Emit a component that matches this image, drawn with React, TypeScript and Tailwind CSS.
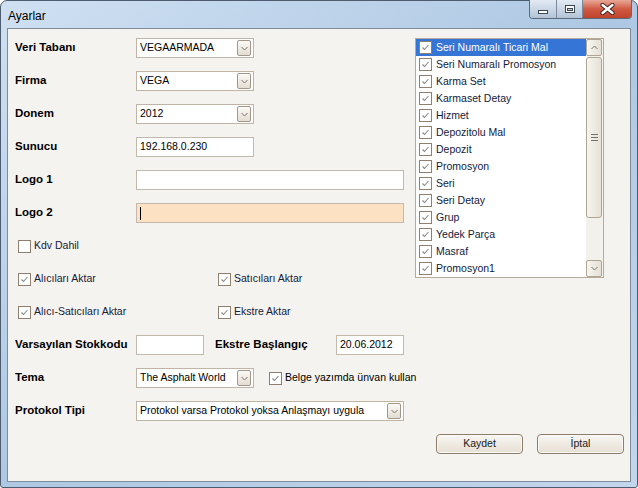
import React from "react";

const items = [
  "Seri Numaralı Ticari Mal",
  "Seri Numaralı Promosyon",
  "Karma Set",
  "Karmaset Detay",
  "Hizmet",
  "Depozitolu Mal",
  "Depozit",
  "Promosyon",
  "Seri",
  "Seri Detay",
  "Grup",
  "Yedek Parça",
  "Masraf",
  "Promosyon1",
];

// Small tick used by every checkbox
const Tick = () => (
  <svg width="9" height="9" viewBox="0 0 9 9">
    <polyline points="1.5,4.5 3.5,6.5 7.5,2" fill="none" stroke="#8a8a8a" strokeWidth="1.1" />
  </svg>
);

const CheckBox: React.FC<{ checked?: boolean }> = ({ checked }) => (
  <div className="w-[13px] h-[13px] shrink-0 border border-[#8e7f70] bg-gradient-to-br from-[#e9e7e3] to-white flex items-center justify-center">
    <div className="w-[11px] h-[11px] bg-white flex items-center justify-center">{checked && <Tick />}</div>
  </div>
);

const Chevron: React.FC<{ up?: boolean }> = ({ up }) => (
  <svg width="7" height="5" viewBox="0 0 7 5">
    <polyline
      points={up ? "0.5,4 3.5,1 6.5,4" : "0.5,1 3.5,4 6.5,1"}
      fill="none"
      stroke="#7a7468"
      strokeWidth="1"
    />
  </svg>
);

const DropButton = () => (
  <div className="w-[14px] h-[16px] mr-[2px] shrink-0 rounded-[2px] border border-[#a3978a] bg-gradient-to-b from-[#fbfaf7] to-[#e3ddd2] flex items-center justify-center">
    <Chevron />
  </div>
);

const ComboBox: React.FC<{ value: string; width: string }> = ({ value, width }) => (
  <div className={`${width} h-[20px] border border-[#bfb4a6] bg-white flex items-center`}>
    <span className="flex-1 pl-[3px] text-black truncate">{value}</span>
    <DropButton />
  </div>
);

const TextBox: React.FC<{ value?: string; width: string; bg?: string; caret?: boolean }> = ({
  value,
  width,
  bg = "bg-white",
  caret,
}) => (
  <div className={`${width} h-[20px] border border-[#c2b8ab] ${bg} flex items-center pl-[3px] text-black`}>
    {caret && <div className="w-px h-[13px] bg-black" />}
    {value}
  </div>
);

const Label: React.FC<{ text: string; width?: string }> = ({ text, width = "w-[121px]" }) => (
  <div className={`${width} shrink-0 font-bold text-[11.5px] text-black`}>{text}</div>
);

const CheckLabel: React.FC<{ text: string }> = ({ text }) => (
  <div className="flex items-center gap-[3px]">
    <CheckBox checked={text !== "Kdv Dahil"} />
    <span className="text-[#14213a]">{text}</span>
  </div>
);

const WinButton: React.FC<{ text: string }> = ({ text }) => (
  <button className="w-[87px] h-[20px] rounded-[4px] border border-[#8c7d6b] bg-gradient-to-b from-[#f8f6f2] to-[#e6dfd3] text-[#1a1a1a] shadow-[inset_0_0_0_1px_#fbfaf8]">
    {text}
  </button>
);

const CheckList = () => (
  <div className="w-[189px] h-[240px] border border-[#b5aa9c] bg-white flex">
    <div className="flex-1 flex flex-col">
      {items.map((it, i) => (
        <div
          key={it}
          className={`h-[17px] flex items-center pl-[3px] gap-[4px] ${i === 0 ? "bg-[#3575d6] text-white" : "text-[#14213a]"}`}
        >
          <CheckBox checked />
          <span>{it}</span>
        </div>
      ))}
    </div>
    {/* scroll bar */}
    <div className="w-[17px] flex flex-col bg-[#f3f1ec] pr-px">
      <div className="h-[17px] rounded-[2px] border border-[#b0a595] bg-gradient-to-r from-[#f7f5f1] to-[#e6e0d6] flex items-center justify-center">
        <Chevron up />
      </div>
      <div className="h-[161px] mt-[1px] rounded-[3px] border border-[#b0a595] bg-gradient-to-r from-[#f7f5f1] to-[#e6e0d6] flex flex-col items-center justify-center gap-[2px]">
        <div className="w-[7px] h-px bg-[#77706a]" />
        <div className="w-[7px] h-px bg-[#77706a]" />
        <div className="w-[7px] h-px bg-[#77706a]" />
      </div>
      <div className="flex-1" />
      <div className="h-[17px] rounded-[2px] border border-[#b0a595] bg-gradient-to-r from-[#f7f5f1] to-[#e6e0d6] flex items-center justify-center">
        <Chevron />
      </div>
    </div>
  </div>
);

const App: React.FC = () => {
  return (
    <div className="w-[638px] h-[488px] font-['Liberation_Sans',Arial,sans-serif] text-[10.5px] overflow-hidden">
      <div className="w-full h-full rounded-t-[7px] rounded-b-[3px] border border-[#4d5d6f] bg-gradient-to-br from-[#cfe0f2] via-[#aec8e3] to-[#c2d6ec] flex flex-col">
        {/* Title bar */}
        <div className="h-[27px] flex items-start justify-between">
          <div className="pl-[7px] pt-[6px] text-[12px] text-black">Ayarlar</div>
          <div className="flex h-[19px] mr-[5px] -mt-px rounded-b-[4px] border border-t-0 border-[#5b6a7b] overflow-hidden">
            <div className="w-[27px] bg-gradient-to-b from-[#e3ebf4] to-[#b2c3d7] border-r border-[#7a8899] flex items-center justify-center">
              <div className="w-[10px] h-[4px] mt-[5px] bg-white border border-[#3c4652]" />
            </div>
            <div className="w-[26px] bg-gradient-to-b from-[#e3ebf4] to-[#b2c3d7] border-r border-[#7a8899] flex items-center justify-center">
              <div className="w-[10px] h-[8px] border border-[#3c4652] bg-white flex items-center justify-center">
                <div className="w-[6px] h-[3px] mt-px border border-[#3c4652] bg-[#c8d3df]" />
              </div>
            </div>
            <div className="w-[48px] bg-gradient-to-b from-[#e9a797] via-[#cf5a43] to-[#c0412c] flex items-center justify-center">
              <svg width="15" height="12" viewBox="0 0 15 12">
                <path d="M2.5 2 L12.5 10 M12.5 2 L2.5 10" stroke="#3b2320" strokeWidth="4.2" strokeLinecap="round" />
                <path d="M2.5 2 L12.5 10 M12.5 2 L2.5 10" stroke="#ffffff" strokeWidth="2.4" strokeLinecap="round" />
              </svg>
            </div>
          </div>
        </div>

        {/* Client area */}
        <div className="ml-[6px] mr-[6px] mb-[5px] flex-1 border border-[#7d8b9b] bg-[#f5f3ef] pt-[9px] pl-[7px] flex flex-col gap-[13px]">
          <div className="flex">
            <div className="w-[400px] flex flex-col gap-[13px]">
              <div className="h-[20px] flex items-center">
                <Label text="Veri Tabanı" />
                <ComboBox value="VEGAARMADA" width="w-[118px]" />
              </div>
              <div className="h-[20px] flex items-center">
                <Label text="Firma" />
                <ComboBox value="VEGA" width="w-[118px]" />
              </div>
              <div className="h-[20px] flex items-center">
                <Label text="Donem" />
                <ComboBox value="2012" width="w-[118px]" />
              </div>
              <div className="h-[20px] flex items-center">
                <Label text="Sunucu" />
                <TextBox value="192.168.0.230" width="w-[118px]" />
              </div>
              <div className="h-[20px] flex items-center">
                <Label text="Logo 1" />
                <TextBox width="w-[268px]" />
              </div>
              <div className="h-[20px] flex items-center">
                <Label text="Logo 2" />
                <TextBox width="w-[268px]" bg="bg-[#fde1c3]" caret />
              </div>
              <div className="h-[20px] flex items-center pl-[3px]">
                <CheckLabel text="Kdv Dahil" />
              </div>
              <div className="h-[20px] flex items-center pl-[3px]">
                <div className="w-[200px]">
                  <CheckLabel text="Alıcıları Aktar" />
                </div>
                <CheckLabel text="Satıcıları Aktar" />
              </div>
            </div>
            <CheckList />
          </div>

          <div className="h-[20px] flex items-center pl-[3px]">
            <div className="w-[200px]">
              <CheckLabel text="Alıcı-Satıcıları Aktar" />
            </div>
            <CheckLabel text="Ekstre Aktar" />
          </div>

          <div className="h-[20px] flex items-center">
            <Label text="Varsayılan Stokkodu" />
            <TextBox width="w-[68px]" />
            <Label text="Ekstre Başlangıç" width="w-[132px] pl-[11px]" />
            <TextBox value="20.06.2012" width="w-[68px]" />
          </div>

          <div className="h-[20px] flex items-center">
            <Label text="Tema" />
            <ComboBox value="The Asphalt World" width="w-[118px]" />
            <div className="ml-[15px]">
              <div className="flex items-center gap-[3px]">
                <CheckBox checked />
                <span className="text-black">Belge yazımda ünvan kullan</span>
              </div>
            </div>
          </div>

          <div className="h-[20px] flex items-center">
            <Label text="Protokol Tipi" />
            <ComboBox value="Protokol varsa Protokol yoksa Anlaşmayı uygula" width="w-[268px]" />
          </div>

          <div className="h-[20px] flex items-center justify-end gap-[14px] pr-[6px]">
            <WinButton text="Kaydet" />
            <WinButton text="İptal" />
          </div>
        </div>
      </div>
    </div>
  );
};

export default App;
